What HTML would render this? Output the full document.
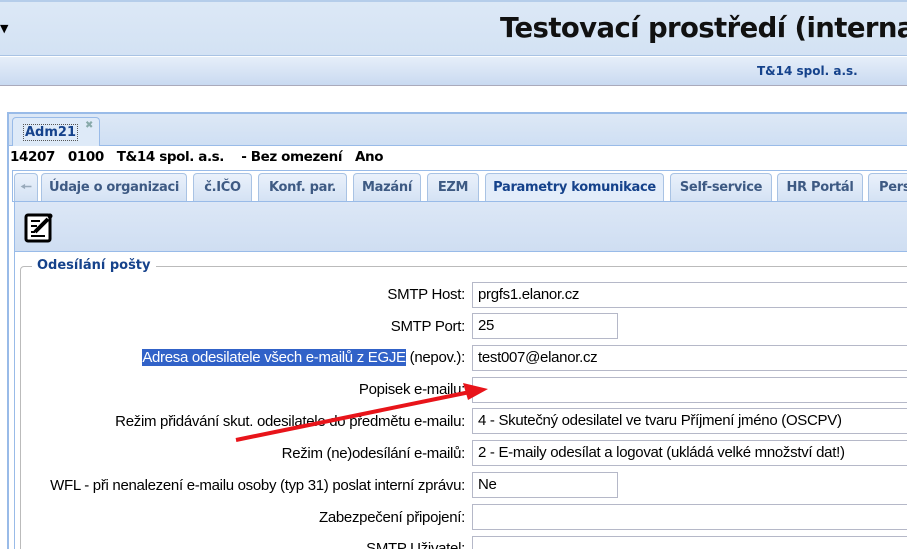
<!DOCTYPE html>
<html><head><meta charset="utf-8"><style>
*{box-sizing:border-box;margin:0;padding:0}
html,body{width:907px;height:549px;overflow:hidden}
body{background:#fff;font-family:"DejaVu Sans","Liberation Sans",sans-serif;position:relative}
.a{position:absolute}
.hdr{left:0;top:0;width:907px;height:56px;background:linear-gradient(#dce8f6,#d3e2f4);border-top:2px solid #b5cdea;border-bottom:1px solid #a9c3e4}
.title{left:500px;top:12px;font-size:27.5px;font-weight:bold;color:#111;white-space:nowrap;font-family:"DejaVu Sans",sans-serif;letter-spacing:-0.6px}
.band{left:0;top:57px;width:907px;height:29px;background:linear-gradient(#e6eef9,#c9daf1);border-bottom:1px solid #aab}
.comp{left:757px;top:64px;font-size:12px;font-weight:bold;color:#15428b}
.strip{left:7px;top:112px;width:900px;height:34px;background:linear-gradient(#dde8f6,#cfdff3);border-top:2px solid #99bbe8;border-left:2px solid #99bbe8;border-bottom:1px solid #99bbe8}
.adm{left:12px;top:117px;width:88px;height:29px;background:#deeaf8;border:1px solid #99bbe8;border-bottom:none;border-radius:4px 4px 0 0}
.info{left:10px;top:149px;font-size:13.5px;font-weight:bold;color:#000;white-space:pre;letter-spacing:-0.4px}
.side{left:7px;top:146px;width:2px;height:403px;background:#99bbe8}
.tabs{left:12px;top:170px;width:895px;height:32px;background:#fff;border:1px solid #99bbe8;border-right:none}
.tab{position:absolute;top:2px;height:28px;background:linear-gradient(#eaf1fb,#d4e2f4);border:1px solid #a9c3e4;border-bottom:none;border-radius:4px 4px 0 0;font-size:13px;font-weight:bold;color:#3e5a83;text-align:center;line-height:27px;white-space:nowrap;overflow:hidden;letter-spacing:-0.3px}
.tab.on{background:#e3edfa;color:#15428b}
.tool{left:14px;top:202px;width:893px;height:50px;background:linear-gradient(#dce7f6,#cfdef2);border-left:1px solid #99bbe8;border-bottom:1px solid #99bbe8}
.fs{left:20px;top:266px;width:900px;height:300px;border:1px solid #bbb;border-radius:4px}
.leg{left:32px;top:258px;background:#fff;padding:0 5px;font-size:13px;font-weight:bold;color:#15428b}
.lbl{position:absolute;right:442px;font-size:15px;color:#000;white-space:nowrap;font-family:"Liberation Sans",sans-serif;letter-spacing:-0.3px}
.inp{position:absolute;left:472px;height:26px;border:1px solid #b5b8c8;background:#fff;font-size:15px;padding:3px 5px;font-family:"Liberation Sans",sans-serif;white-space:nowrap;letter-spacing:-0.3px;overflow:hidden}
</style></head><body>
<div class="a hdr"></div>
<div class="a" style="left:0;top:22px;font-size:11px">&#9660;</div>
<div class="a title">Testovací prostředí (interna</div>
<div class="a band"></div>
<div class="a comp">T&amp;14 spol. a.s.</div>
<div class="a strip"></div>
<div class="a adm"><span style="position:absolute;left:10px;top:6px;font-size:13px;font-weight:bold;color:#15428b;border:1px dotted #555;padding:0 1px">Adm21</span><span style="position:absolute;left:72px;top:2px;font-size:10px;color:#8aa">&#10006;</span></div>
<div class="a side"></div>
<div class="a info">14207   0100   T&amp;14 spol. a.s.    - Bez omezení   Ano</div>
<div class="a tabs">
<div class="tab" style="left:1px;width:24px;color:#9ab">&#129044;</div>
<div class="tab" style="left:28px;width:146px">Údaje o organizaci</div>
<div class="tab" style="left:180px;width:59px">č.IČO</div>
<div class="tab" style="left:245px;width:89px">Konf. par.</div>
<div class="tab" style="left:340px;width:68px">Mazání</div>
<div class="tab" style="left:414px;width:52px">EZM</div>
<div class="tab on" style="left:472px;width:179px">Parametry komunikace</div>
<div class="tab" style="left:657px;width:102px">Self-service</div>
<div class="tab" style="left:764px;width:86px">HR Portál</div>
<div class="tab" style="left:855px;width:60px;text-align:left;padding-left:10px">Pers</div>
</div>
<div class="a tool"></div>
<svg class="a" style="left:24px;top:212px" width="30" height="32" viewBox="0 0 30 32"><rect x="2" y="3" width="24" height="26" rx="2" fill="#fff" stroke="#000" stroke-width="3"/><path d="M7 9h9M7 14h6M7 20h4M7 24h14" stroke="#000" stroke-width="2"/><path d="M11 20l13-13" stroke="#000" stroke-width="4"/><circle cx="26" cy="4" r="2.5" fill="#000"/></svg>
<div class="a" style="left:14px;top:252px;width:1px;height:297px;background:#99bbe8"></div>
<div class="a fs"></div>
<div class="a leg">Odesílání pošty</div>

<div class="lbl" style="top:286px">SMTP Host:</div><div class="inp" style="top:282px;width:440px">prgfs1.elanor.cz</div>
<div class="lbl" style="top:318px">SMTP Port:</div><div class="inp" style="top:313px;width:146px">25</div>
<div class="lbl" style="top:349px"><span style="background:#3162c8;color:#fff">Adresa odesilatele všech e-mailů z EGJE</span> (nepov.):</div><div class="inp" style="top:345px;width:440px">test007@elanor.cz</div>
<div class="lbl" style="top:381px">Popisek e-mailu:</div><div class="inp" style="top:377px;width:440px"></div>
<div class="lbl" style="top:413px">Režim přidávání skut. odesilatele do předmětu e-mailu:</div><div class="inp" style="top:408px;width:440px">4 - Skutečný odesilatel ve tvaru Příjmení jméno (OSCPV)</div>
<div class="lbl" style="top:445px">Režim (ne)odesílání e-mailů:</div><div class="inp" style="top:440px;width:440px">2 - E-maily odesílat a logovat  (ukládá velké množství dat!)</div>
<div class="lbl" style="top:477px">WFL - při nenalezení e-mailu osoby (typ 31) poslat interní zprávu:</div><div class="inp" style="top:472px;width:146px">Ne</div>
<div class="lbl" style="top:509px">Zabezpečení připojení:</div><div class="inp" style="top:504px;width:440px"></div>
<div class="lbl" style="top:540px">SMTP Uživatel:</div><div class="inp" style="top:536px;width:440px"></div>

<svg class="a" style="left:0;top:0" width="907" height="549"><path d="M236 440L470 392" stroke="#e8141a" stroke-width="4"/><path d="M488 389L463 383L468 400Z" fill="#e8141a"/></svg>
</body></html>
